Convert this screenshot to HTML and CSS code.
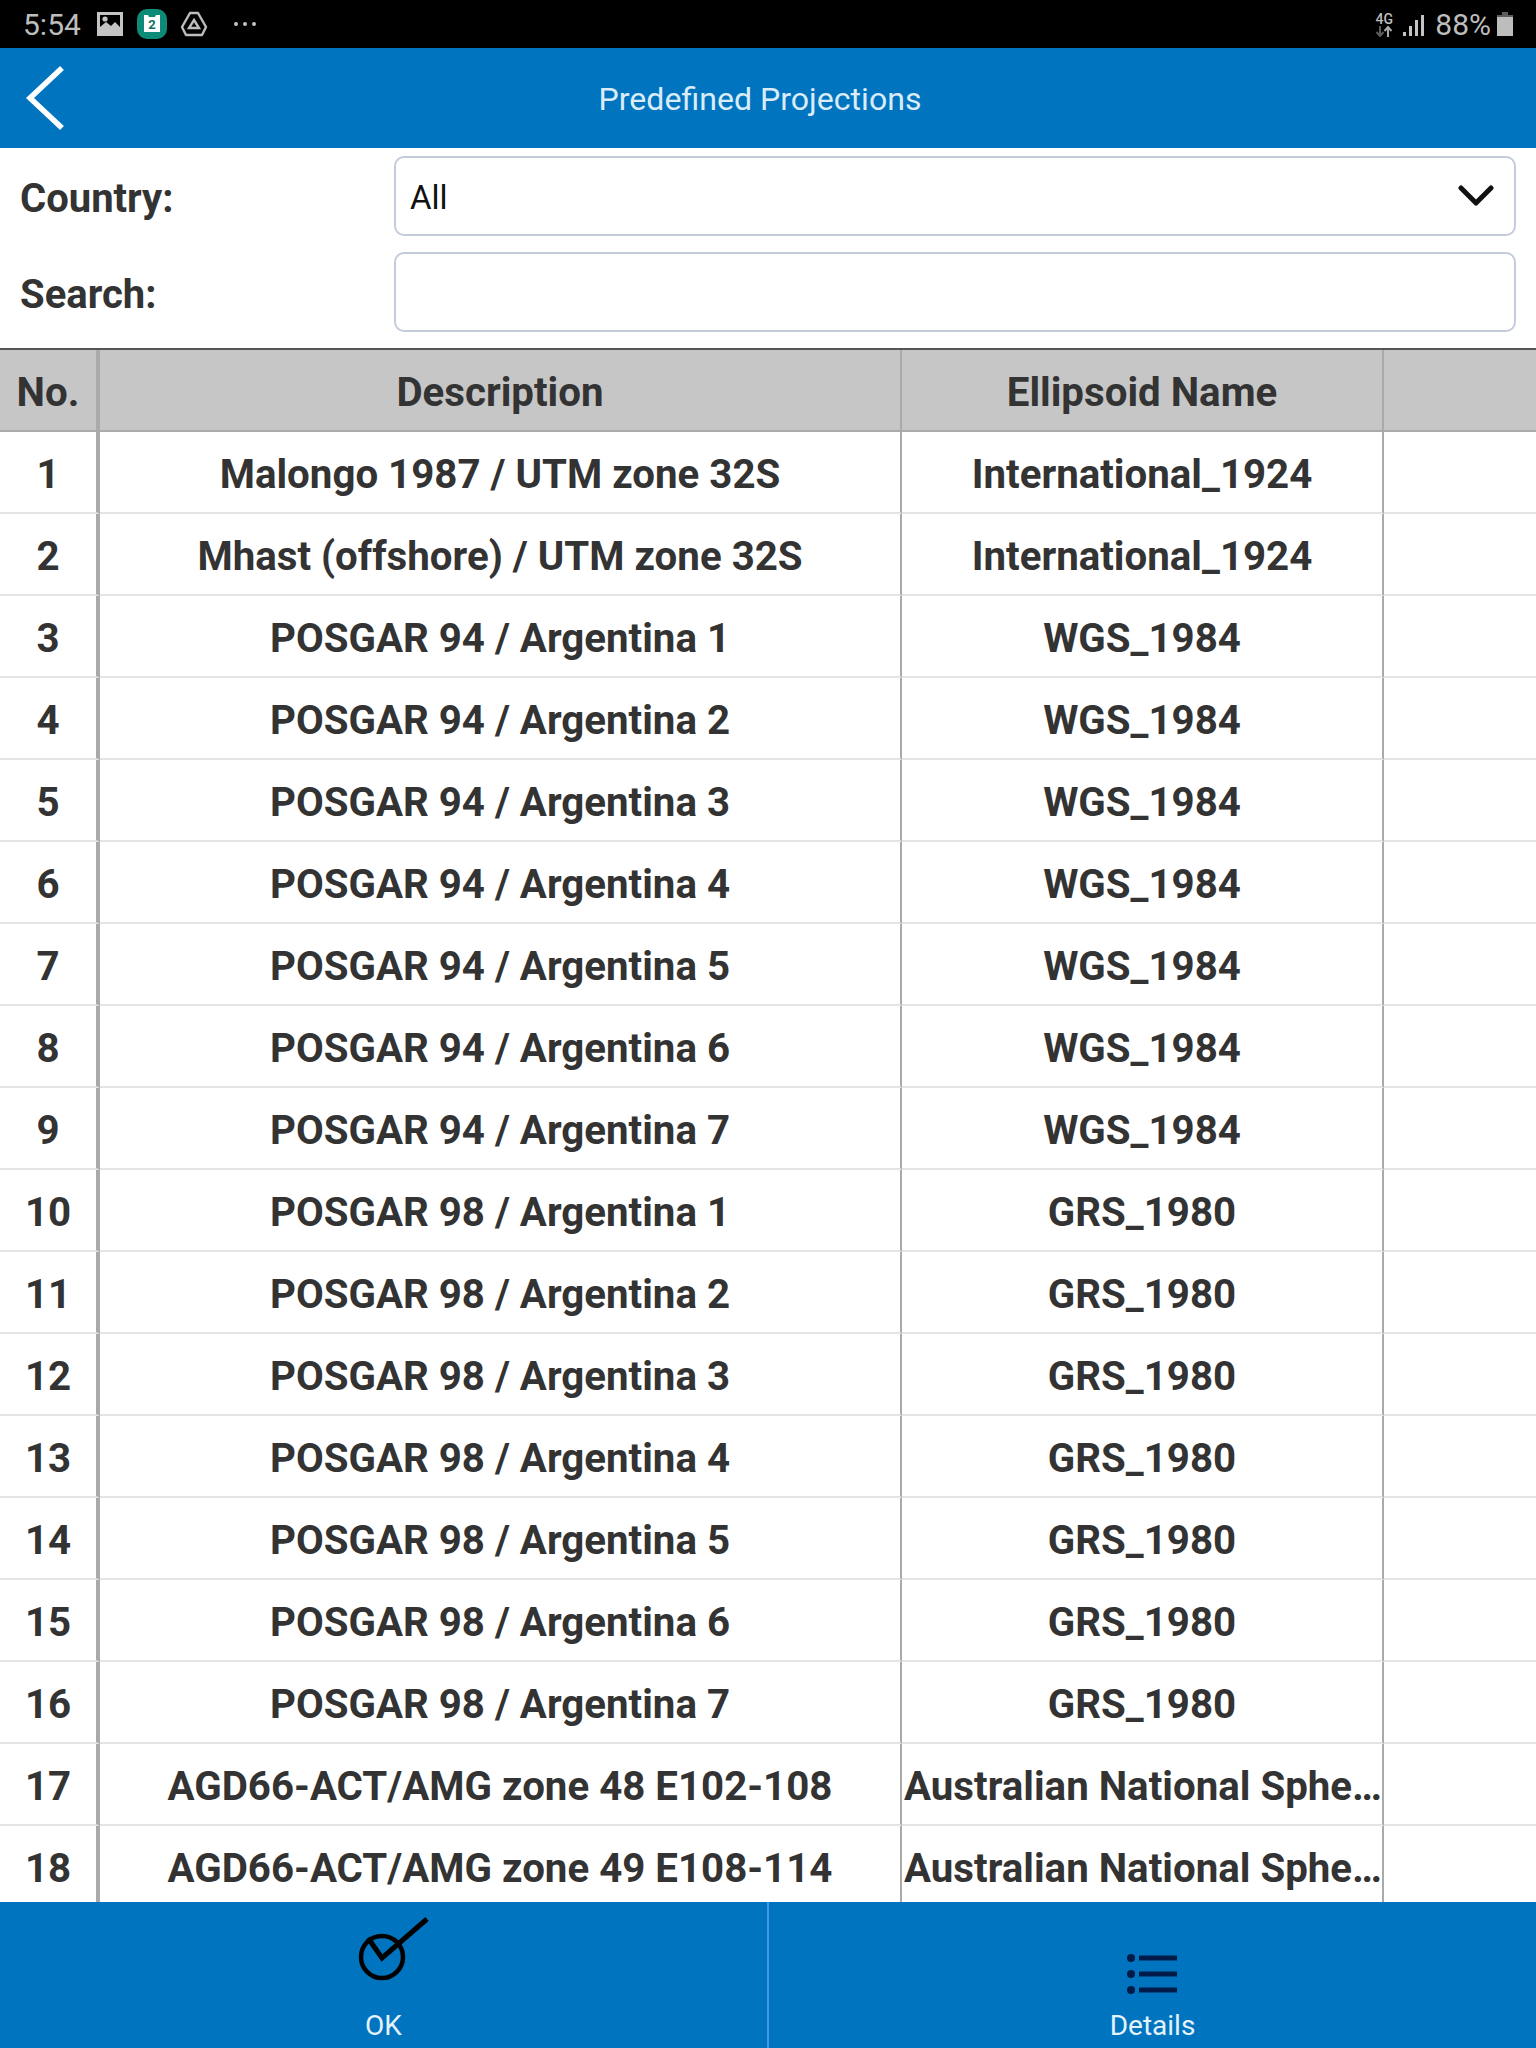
FILE: index.html
```html
<!DOCTYPE html>
<html lang="en">
<head>
  <meta charset="UTF-8" />
  <title>Predefined Projections</title>
  <link rel="stylesheet" href="styles.css">
</head>
<body>
  <div class="status-bar">
    <div class="status-left">
      <span class="status-time">5:54</span>
      <svg class="status-icon" width="28" height="26" viewBox="0 0 28 26">
        <path fill="#c4c4c4" fill-rule="evenodd" d="M1 1h26v24H1z M4 4v12l6-5 5 4 4-4 5 5V4z"/>
        <circle cx="9" cy="8" r="2.6" fill="#c4c4c4"/>
      </svg>
      <svg class="status-icon" width="30" height="30" viewBox="0 0 30 30">
        <rect width="30" height="30" rx="10" fill="#0e8a78"/>
        <path fill="#fff" d="M7 6h4l1 2h6l1-2h4v17H7z"/>
        <text class="cal-num" x="15" y="20" text-anchor="middle">2</text>
      </svg>
      <svg class="status-icon" width="28" height="26" viewBox="0 0 28 26">
        <path fill="none" stroke="#bdbdbd" stroke-width="2.4" stroke-linejoin="round" d="M10 2h8l8 14-4 8H6l-4-8z"/>
        <path fill="none" stroke="#bdbdbd" stroke-width="2.4" d="M14 9l5 8H9z"/>
      </svg>
      <svg class="status-dots" width="24" height="6" viewBox="0 0 24 6">
        <circle cx="3" cy="3" r="2" fill="#c4c4c4"/>
        <circle cx="12" cy="3" r="2" fill="#c4c4c4"/>
        <circle cx="21" cy="3" r="2" fill="#c4c4c4"/>
      </svg>
    </div>
    <div class="status-right">
      <div class="net">
        <span class="net-label">4G</span>
        <svg width="18" height="11" viewBox="0 0 18 11">
          <path fill="none" stroke="#5c5c5c" stroke-width="2" d="M5 0v9M1.500 6l3.500 4 3.500-4"/>
          <path fill="none" stroke="#a8a8a8" stroke-width="2" d="M13 11V2M9.500 5L13 1l3.500 4"/>
        </svg>
      </div>
      <svg class="signal" width="21" height="21" viewBox="0 0 21 21">
        <rect x="0" y="17" width="3" height="4" fill="#c4c4c4"/>
        <rect x="6" y="11" width="3" height="10" fill="#c4c4c4"/>
        <rect x="12" y="5" width="3" height="16" fill="#c4c4c4"/>
        <rect x="18" y="0" width="3" height="21" fill="#c4c4c4"/>
      </svg>
      <span class="status-batt">88%</span>
      <svg width="16" height="24" viewBox="0 0 16 24">
        <path fill="#5c5c5c" d="M5 0h6v3h5v4H0V3h5z"/>
        <rect y="5" width="16" height="19" fill="#bdbdbd"/>
      </svg>
    </div>
  </div>

  <div class="title-bar">
    <svg class="back-icon" width="44" height="68" viewBox="0 0 44 68">
      <path fill="none" stroke="#fff" stroke-width="5.500" d="M38 4L6 34l32 30"/>
    </svg>
    <span class="title-text">Predefined Projections</span>
  </div>

  <div class="filters">
    <div class="filter-row">
      <label class="filter-label">Country:</label>
      <div class="filter-box">
        <span>All</span>
        <svg width="36" height="24" viewBox="0 0 36 24">
          <path fill="none" stroke="#111" stroke-width="5" stroke-linecap="round" stroke-linejoin="round" d="M3 4l15 15L33 4"/>
        </svg>
      </div>
    </div>
    <div class="filter-row">
      <label class="filter-label">Search:</label>
      <div class="filter-box"></div>
    </div>
  </div>

  <div class="table-wrap">
    <table class="proj-table">
      <colgroup>
        <col class="col-no"><col class="col-desc"><col class="col-ell"><col>
      </colgroup>
      <thead>
        <tr><th>No.</th><th>Description</th><th>Ellipsoid Name</th><th></th></tr>
      </thead>
      <tbody>
        <tr><td>1</td><td>Malongo 1987 / UTM zone 32S</td><td>International_1924</td><td></td></tr>
        <tr><td>2</td><td>Mhast (offshore) / UTM zone 32S</td><td>International_1924</td><td></td></tr>
        <tr><td>3</td><td>POSGAR 94 / Argentina 1</td><td>WGS_1984</td><td></td></tr>
        <tr><td>4</td><td>POSGAR 94 / Argentina 2</td><td>WGS_1984</td><td></td></tr>
        <tr><td>5</td><td>POSGAR 94 / Argentina 3</td><td>WGS_1984</td><td></td></tr>
        <tr><td>6</td><td>POSGAR 94 / Argentina 4</td><td>WGS_1984</td><td></td></tr>
        <tr><td>7</td><td>POSGAR 94 / Argentina 5</td><td>WGS_1984</td><td></td></tr>
        <tr><td>8</td><td>POSGAR 94 / Argentina 6</td><td>WGS_1984</td><td></td></tr>
        <tr><td>9</td><td>POSGAR 94 / Argentina 7</td><td>WGS_1984</td><td></td></tr>
        <tr><td>10</td><td>POSGAR 98 / Argentina 1</td><td>GRS_1980</td><td></td></tr>
        <tr><td>11</td><td>POSGAR 98 / Argentina 2</td><td>GRS_1980</td><td></td></tr>
        <tr><td>12</td><td>POSGAR 98 / Argentina 3</td><td>GRS_1980</td><td></td></tr>
        <tr><td>13</td><td>POSGAR 98 / Argentina 4</td><td>GRS_1980</td><td></td></tr>
        <tr><td>14</td><td>POSGAR 98 / Argentina 5</td><td>GRS_1980</td><td></td></tr>
        <tr><td>15</td><td>POSGAR 98 / Argentina 6</td><td>GRS_1980</td><td></td></tr>
        <tr><td>16</td><td>POSGAR 98 / Argentina 7</td><td>GRS_1980</td><td></td></tr>
        <tr><td>17</td><td>AGD66-ACT/AMG zone 48 E102-108</td><td>Australian National Sphe…</td><td></td></tr>
        <tr><td>18</td><td>AGD66-ACT/AMG zone 49 E108-114</td><td>Australian National Sphe…</td><td></td></tr>
      </tbody>
    </table>
  </div>

  <div class="footer">
    <div class="footer-btn">
      <svg width="100" height="84" viewBox="0 0 100 84">
        <circle cx="48" cy="45" r="21" fill="none" stroke="#000" stroke-width="4.500"/>
        <path fill="none" stroke="#000" stroke-width="5" d="M34 26l14 20L93 7"/>
      </svg>
      <span>OK</span>
    </div>
    <div class="footer-btn">
      <svg width="100" height="84" viewBox="0 0 100 84">
        <g fill="#001a4a">
          <circle cx="28" cy="46" r="4"/>
          <circle cx="28" cy="62" r="4"/>
          <circle cx="28" cy="78" r="4"/>
          <rect x="36" y="43.500" width="38" height="5"/>
          <rect x="36" y="59.500" width="38" height="5"/>
          <rect x="36" y="75.500" width="38" height="5"/>
        </g>
      </svg>
      <span>Details</span>
    </div>
  </div>
</body>
</html>
```

FILE: styles.css
```css
* {
  box-sizing: border-box;
}
html, body {
  margin: 0;
  height: 2048px;
}
body {
  display: flex;
  flex-direction: column;
  background: #fff;
  font-family: Roboto, 'Liberation Sans', sans-serif;
  color: #333;
  overflow: hidden;
}
.status-bar {
  height: 48px;
  flex: none;
  background: #000;
  color: #bdbdbd;
  display: flex;
  justify-content: space-between;
  align-items: center;
  padding: 0 23px 0 23px;
}
.status-left, .status-right {
  display: flex;
  align-items: center;
}
.status-time {
  font-size: 30px;
  width: 73px;
}
.status-icon {
  margin-right: 13px;
}
.status-dots {
  margin-left: 12px;
}
.cal-num {
  font-size: 13px;
  font-weight: 700;
  fill: #0e6f62;
}
.net {
  display: flex;
  flex-direction: column;
  align-items: center;
  margin-right: 10px;
}
.net-label {
  font-size: 14px;
  line-height: 14px;
  font-weight: 500;
}
.signal {
  margin-top: 2px;
}
.status-batt {
  font-size: 30px;
  margin: 0 6px 0 11px;
}
.title-bar {
  height: 100px;
  flex: none;
  background: #0074bf;
  display: flex;
  align-items: center;
  justify-content: center;
  position: relative;
}
.back-icon {
  position: absolute;
  left: 24px;
  top: 16px;
}
.title-text {
  color: #d9ecf8;
  font-size: 32.100px;
  margin: 2px 0 0 -16px;
}
.filters {
  height: 200px;
  flex: none;
  padding: 8px 20px 0;
  display: flex;
  flex-direction: column;
  gap: 16px;
}
.filter-row {
  display: flex;
  align-items: center;
}
.filter-label {
  width: 374px;
  font-size: 40px;
  font-weight: 700;
  flex: none;
  padding-top: 5px;
}
.filter-box {
  flex: 1;
  height: 80px;
  border: 2px solid #c3cbdc;
  border-radius: 10px;
  padding: 2px 20px 0 14px;
  display: flex;
  align-items: center;
  justify-content: space-between;
  font-size: 33px;
  color: #111;
}
.filter-box svg {
  margin-top: -2px;
}
.table-wrap {
  flex: 1;
  min-height: 0;
  overflow: hidden;
  border-top: 2px solid #555;
}
.proj-table {
  width: 1536px;
  table-layout: fixed;
  border-collapse: separate;
  border-spacing: 0;
  font-size: 40.250px;
  font-weight: 700;
}
.col-no {
  width: 100px;
}
.col-desc {
  width: 802px;
}
.col-ell {
  width: 482px;
}
.proj-table th, .proj-table td {
  padding: 4px 2px 0;
  text-align: center;
  white-space: nowrap;
  overflow: hidden;
}
.proj-table th {
  height: 82px;
  background: #c6c6c6;
  border-bottom: 2px solid #aaa;
  border-right: 2px solid #aaa;
}
.proj-table td {
  height: 82px;
  border-bottom: 2px solid #e4e4e4;
  border-right: 2px solid #aaa;
}
.proj-table th:first-child, .proj-table td:first-child {
  border-right-width: 4px;
}
.proj-table th:last-child, .proj-table td:last-child {
  border-right: none;
}
.footer {
  height: 146px;
  flex: none;
  background: #0074bf;
  display: flex;
}
.footer-btn {
  flex: 1;
  display: flex;
  flex-direction: column;
  align-items: center;
  padding-top: 10px;
  color: #e3f2fb;
  font-size: 28px;
}
.footer-btn + .footer-btn {
  border-left: 2px solid #3b9bea;
}
.footer-btn span {
  margin-top: 13px;
}
```
